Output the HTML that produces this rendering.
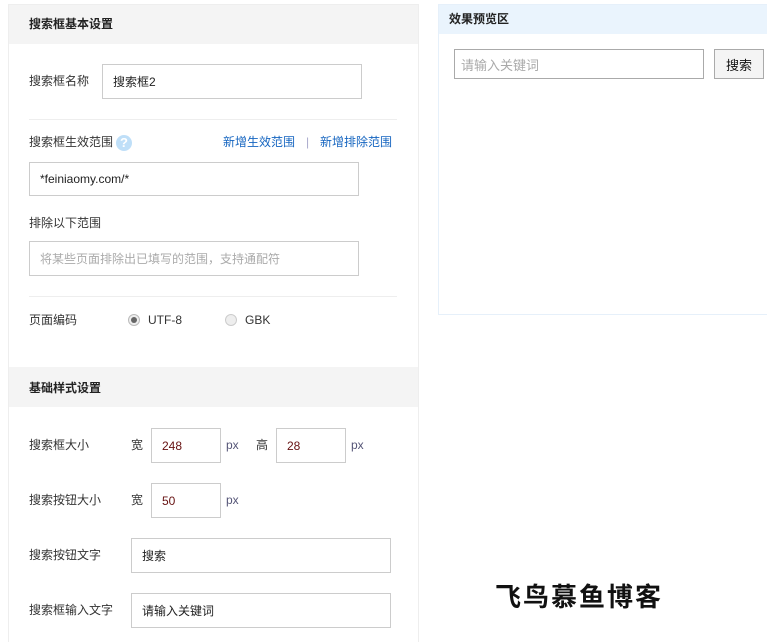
<!DOCTYPE html>
<html style="width:767px;height:642px;overflow:hidden"><head><meta charset="utf-8"><style>
*{margin:0;padding:0;box-sizing:border-box}
body{width:767px;height:642px;background:#fff;position:relative;overflow:hidden;font-family:"Liberation Sans","Noto Sans CJK SC",sans-serif;font-size:12px;color:#333}
.a{position:absolute;white-space:nowrap;line-height:14px}
.box{position:absolute;border:1px solid #ccc;background:#fff}
.bx{position:absolute;border:1px solid #ccc;background:#fff;padding-left:10px;font-size:12px;color:#222;display:flex;align-items:center}
.hr{position:absolute;height:1px;background:#eee;left:29px;width:368px}
.b{font-weight:bold;color:#222}
</style></head><body>
<div class="box" style="left:8px;top:4px;width:411px;height:638px;border-color:#eee;border-bottom:none"></div>
<div style="position:absolute;left:9px;top:5px;width:409px;height:39px;background:#f4f4f4"></div>
<div class="a b" style="left:29px;top:17px">搜索框基本设置</div>
<div class="a" style="left:29px;top:74px">搜索框名称</div>
<div class="bx" style="left:102px;top:64px;width:260px;height:35px">搜索框2</div>
<div class="hr" style="top:119px"></div>
<div class="a" style="left:29px;top:135px">搜索框生效范围</div>
<div style="position:absolute;left:116px;top:135px;width:16px;height:16px;border-radius:50%;background:#bfdff8;color:#fff;font-weight:bold;font-size:13px;text-align:center;line-height:16px">?</div>
<div class="a" style="left:223px;top:135px;color:#1565c0">新增生效范围</div>
<div class="a" style="left:306px;top:135px;color:#aac">|</div>
<div class="a" style="left:320px;top:135px;color:#1565c0">新增排除范围</div>
<div class="bx" style="left:29px;top:162px;width:330px;height:34px">*feiniaomy.com/*</div>
<div class="a" style="left:29px;top:216px">排除以下范围</div>
<div class="bx" style="left:29px;top:241px;width:330px;height:35px;color:#aaa">将某些页面排除出已填写的范围，支持通配符</div>
<div class="hr" style="top:296px"></div>
<div class="a" style="left:29px;top:313px">页面编码</div>
<div style="position:absolute;left:128px;top:314px;width:12px;height:12px;border-radius:50%;border:1px solid #bbb;background:#eee"><div style="position:absolute;left:2px;top:2px;width:6px;height:6px;border-radius:50%;background:#666"></div></div>
<div class="a" style="left:148px;top:313px">UTF-8</div>
<div style="position:absolute;left:225px;top:314px;width:12px;height:12px;border-radius:50%;border:1px solid #ccc;background:#eee"></div>
<div class="a" style="left:245px;top:313px">GBK</div>
<div style="position:absolute;left:9px;top:367px;width:409px;height:40px;background:#f4f4f4"></div>
<div class="a b" style="left:29px;top:381px">基础样式设置</div>
<div class="a" style="left:29px;top:438px">搜索框大小</div>
<div class="a" style="left:131px;top:438px">宽</div>
<div class="bx" style="left:151px;top:428px;width:70px;height:35px;color:#611">248</div>
<div class="a" style="left:226px;top:438px;color:#557">px</div>
<div class="a" style="left:256px;top:438px">高</div>
<div class="bx" style="left:276px;top:428px;width:70px;height:35px;color:#611">28</div>
<div class="a" style="left:351px;top:438px;color:#557">px</div>
<div class="a" style="left:29px;top:493px">搜索按钮大小</div>
<div class="a" style="left:131px;top:493px">宽</div>
<div class="bx" style="left:151px;top:483px;width:70px;height:35px;color:#611">50</div>
<div class="a" style="left:226px;top:493px;color:#557">px</div>
<div class="a" style="left:29px;top:548px">搜索按钮文字</div>
<div class="bx" style="left:131px;top:538px;width:260px;height:35px">搜索</div>
<div class="a" style="left:29px;top:603px">搜索框输入文字</div>
<div class="bx" style="left:131px;top:593px;width:260px;height:35px">请输入关键词</div>
<div class="a" style="left:495px;top:582px;font-size:26px;line-height:30px;font-weight:bold;color:#111;letter-spacing:2px">飞鸟慕鱼博客</div>
<div class="box" style="left:438px;top:4px;width:340px;height:311px;border-color:#e6f0fa"></div>
<div style="position:absolute;left:439px;top:5px;width:330px;height:29px;background:#eaf4fd"></div>
<div class="a b" style="left:449px;top:12px">效果预览区</div>
<div class="bx" style="left:454px;top:49px;width:250px;height:30px;border-color:#aaa;padding-left:6px;color:#aaa;font-size:13px">请输入关键词</div>
<div class="bx" style="left:714px;top:49px;width:50px;height:30px;border-color:#aaa;background:#f4f4f4;justify-content:center;padding:0;font-size:13px;color:#111">搜索</div>
</body></html>
